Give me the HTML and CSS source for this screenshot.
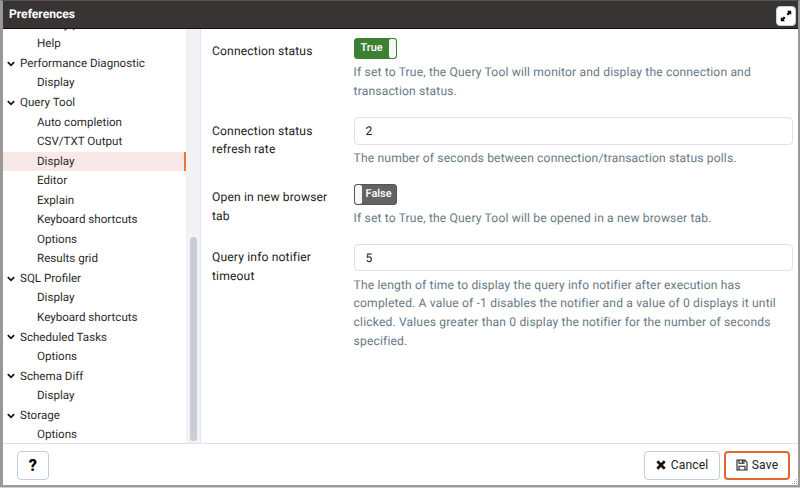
FILE: index.html
```html
<!DOCTYPE html>
<html lang="en">
<head>
<meta charset="utf-8">
<title>Preferences</title>
<link rel="stylesheet" href="styles.css">
</head>
<body>
<svg class="defs" width="0" height="0"><defs>
<symbol id="chev" viewBox="0 0 8 6"><path d="M.8 1.1 4 4.3 7.2 1.1" fill="none" stroke="#111" stroke-width="1.7"/></symbol>
</defs></svg>
<div class="dialog">
  <header class="titlebar">
    <span class="title">Preferences</span>
    <button class="maximize" aria-label="Maximize"><svg width="12" height="12" viewBox="0 0 12 12"><path d="M7 .8h4.2V5L9.9 3.7 8.1 5.5 6.5 3.9l1.8-1.8zM5 11.2H.8V7l1.3 1.3L3.9 6.5l1.6 1.6-1.8 1.8z" fill="#000"/></svg></button>
  </header>
  <main class="body">
    <nav class="tree">
      <ul class="rows">
        <li class="leaf">Binary paths</li>
        <li class="leaf">Help</li>
        <li class="group"><svg><use href="#chev"/></svg>Performance Diagnostic</li>
        <li class="leaf">Display</li>
        <li class="group"><svg><use href="#chev"/></svg>Query Tool</li>
        <li class="leaf">Auto completion</li>
        <li class="leaf">CSV/TXT Output</li>
        <li class="leaf selected">Display</li>
        <li class="leaf">Editor</li>
        <li class="leaf">Explain</li>
        <li class="leaf">Keyboard shortcuts</li>
        <li class="leaf">Options</li>
        <li class="leaf">Results grid</li>
        <li class="group"><svg><use href="#chev"/></svg>SQL Profiler</li>
        <li class="leaf">Display</li>
        <li class="leaf">Keyboard shortcuts</li>
        <li class="group"><svg><use href="#chev"/></svg>Scheduled Tasks</li>
        <li class="leaf">Options</li>
        <li class="group"><svg><use href="#chev"/></svg>Schema Diff</li>
        <li class="leaf">Display</li>
        <li class="group"><svg><use href="#chev"/></svg>Storage</li>
        <li class="leaf">Options</li>
      </ul>
      <div class="track"><div class="thumb"></div></div>
    </nav>
    <section class="form">
      <div class="field">
        <div class="label">Connection status</div>
        <div class="control">
          <div class="switch on"><span>True</span><i></i></div>
          <p class="help">If set to True, the Query Tool will monitor and display the connection and<br>transaction status.</p>
        </div>
      </div>
      <div class="field rate">
        <div class="label">Connection status<br>refresh rate</div>
        <div class="control">
          <div class="input">2</div>
          <p class="help">The number of seconds between connection/transaction status polls.</p>
        </div>
      </div>
      <div class="field tab">
        <div class="label">Open in new browser<br>tab</div>
        <div class="control">
          <div class="switch off"><i></i><span>False</span></div>
          <p class="help">If set to True, the Query Tool will be opened in a new browser tab.</p>
        </div>
      </div>
      <div class="field timeout">
        <div class="label">Query info notifier<br>timeout</div>
        <div class="control">
          <div class="input">5</div>
          <p class="help">The length of time to display the query info notifier after execution has<br>completed. A value of -1 disables the notifier and a value of 0 displays it until<br>clicked. Values greater than 0 display the notifier for the number of seconds<br>specified.</p>
        </div>
      </div>
    </section>
  </main>
  <footer class="footer">
    <button class="btn question">?</button>
    <button class="btn cancel"><svg width="10" height="10" viewBox="0 0 10 10"><path d="M1.3 1.3 8.7 8.7M8.7 1.3 1.3 8.7" stroke="#111" stroke-width="2.7"/></svg>Cancel</button>
    <button class="btn save"><svg width="12" height="12" viewBox="0 0 12 12"><path d="M1 1h7.8L11 3.2V11H1zM3 1v3.3h5V1M6.3 1v3.3M3 11V7.2h6V11" fill="none" stroke="#222" stroke-width="1.1"/></svg>Save</button>
  </footer>
  <svg class="grip" width="6" height="6" viewBox="0 0 6 6"><path d="M4 0h1v1H4zM2 2h1v1H2zM4 2h1v1H4zM0 4h1v1H0zM2 4h1v1H2zM4 4h1v1H4z" fill="#aaa"/></svg>
</div>
</body>
</html>
```
FILE: styles.css
```css
* { box-sizing: border-box; }
body {
  margin: 0;
  width: 800px;
  height: 488px;
  overflow: hidden;
  background: #d0d0d0;
  font-family: Roboto, "Liberation Sans", sans-serif;
  font-size: 12.1px;
  letter-spacing: 0.15px;
  text-rendering: geometricPrecision;
  color: #222;
}
.defs { position: absolute; }
.dialog {
  position: relative;
  display: flex;
  flex-direction: column;
  width: 800px;
  height: 487px;
  border: 2px solid #999;
  border-top: 1px solid #555;
  border-left-width: 3px;
  background: #fff;
}
.titlebar {
  display: flex;
  flex: none;
  align-items: center;
  justify-content: space-between;
  height: 28px;
  padding: 2px 2px 0 6px;
  border-bottom: 1px solid #111;
  background: #383434;
}
.title { margin-top: -3px; color: #fff; font-weight: 700; font-size: 12.1px; letter-spacing: 0; }
.maximize {
  display: flex;
  align-items: center;
  justify-content: center;
  width: 20px;
  height: 20px;
  padding: 0;
  border: 1px solid #c8cfdb;
  border-radius: 4px;
  background: #fff;
}
.body { display: flex; flex: none; height: 414px; }
.tree {
  display: flex;
  flex: none;
  width: 198px;
  overflow: hidden;
  border-right: 1px solid #e4e6ec;
}
.rows {
  flex: 1;
  margin: -14.2px 0 0;
  padding: 0;
  list-style: none;
  line-height: 19.55px;
  font-size: 11.6px;
  letter-spacing: 0;
  color: #2b2b2b;
}
.rows li { display: flex; align-items: center; height: 19.55px; white-space: nowrap; }
.leaf { padding-left: 34px; }
.group { padding-left: 4px; }
.group svg { width: 8px; height: 6px; margin-right: 5px; }
.selected { border-right: 2px solid #e8743a; background: #f8e9e8; }
.track { display: flex; align-items: flex-end; justify-content: center; width: 14px; background: #f0f2f5; }
.thumb { width: 7px; height: 204px; margin-bottom: 2px; border-radius: 4px; background: #c9ced4; }
.form { flex: 1; padding: 9px 5px 0 11px; }
.field { display: flex; line-height: 18.7px; }
.label { flex: none; width: 141.6px; padding-top: 4.4px; }
.control { flex: 1; }
.switch {
  display: flex;
  width: 43px;
  height: 21px;
  overflow: hidden;
  border: 1px solid #3d8033;
  border-radius: 3px;
  color: #fff;
  font-size: 11px;
  font-weight: 500;
  letter-spacing: 0;
  line-height: 18px;
}
.switch span { flex: 1; text-align: center; }
.switch i { width: 7px; border-radius: 2px; background: #f7f7f7; }
.on { background: #3d8033; }
.off { border-color: #555; background: #636363; }
.help { margin: 4.4px 0 0; color: #697986; white-space: nowrap; }
.rate { margin-top: 16.4px; }
.tab { margin-top: 16px; }
.timeout { margin-top: 15.6px; }
.input {
  height: 27.6px;
  padding-left: 11px;
  border: 1px solid #dfe2e9;
  border-radius: 4px;
  line-height: 26px;
}
.footer {
  display: flex;
  flex: 1;
  align-items: center;
  padding: 1px 8px 0 14px;
  border-top: 1px solid #dfe2e6;
}
.btn {
  display: flex;
  align-items: center;
  justify-content: center;
  height: 29px;
  padding: 0;
  border: 1px solid #c4cbd6;
  border-radius: 4px;
  background: #fff;
  color: #222;
  font: inherit;
  letter-spacing: inherit;
}
.question { width: 32px; margin-right: auto; font-size: 16px; font-weight: 900; color: #000; }
.cancel { width: 76px; margin-right: 4px; gap: 5px; }
.save { width: 66px; gap: 4px; border: 2px solid #e0662d; }
.grip { position: absolute; right: 0; bottom: 0; }
```
